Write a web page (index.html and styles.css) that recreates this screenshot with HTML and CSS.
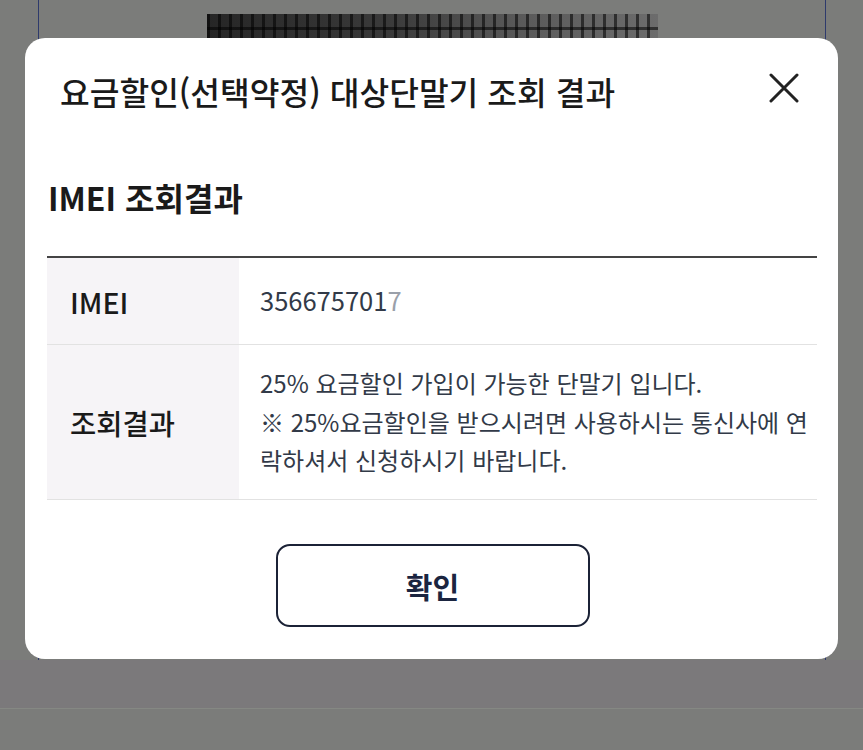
FILE: index.html
```html
<!DOCTYPE html>
<html lang="ko">
<head>
<meta charset="utf-8">
<title>요금할인 대상단말기 조회 결과</title>
<link rel="stylesheet" href="styles.css">
</head>
<body>
<div class="page">
  <div class="page-frame">
    <div class="barcode"></div>
  </div>
  <div class="page-band"></div>
</div>

<div class="overlay">
  <div class="modal" role="dialog" aria-labelledby="modal-title">
    <div class="modal-header">
      <h1 id="modal-title" class="modal-title">요금할인(선택약정) 대상단말기 조회 결과</h1>
      <button class="close-btn" aria-label="닫기">
        <svg width="30" height="30" viewBox="0 0 30 30" aria-hidden="true">
          <path d="M2 2 L28 28 M28 2 L2 28" stroke="#222" stroke-width="3" stroke-linecap="round" fill="none"/>
        </svg>
      </button>
    </div>

    <h2 class="section-title">IMEI 조회결과</h2>

    <table class="result-table">
      <tr class="row-imei">
        <th>IMEI</th>
        <td><span class="imei-num">356675701<span class="fade">7</span></span></td>
      </tr>
      <tr class="row-result">
        <th>조회결과</th>
        <td>
          <span class="line">25% 요금할인 가입이 가능한 단말기 입니다.</span>
          <span class="line">※ 25%요금할인을 받으시려면 사용하시는 통신사에 연</span>
          <span class="line">락하셔서 신청하시기 바랍니다.</span>
        </td>
      </tr>
    </table>

    <div class="modal-footer">
      <button class="confirm-btn">확인</button>
    </div>
  </div>
</div>
</body>
</html>
```

FILE: styles.css
```css
html, body {
  margin: 0;
  padding: 0;
}

body {
  width: 863px;
  height: 750px;
  overflow: hidden;
  background: #7b7c7a;
  font-family: "Noto Sans CJK KR", "Noto Sans", sans-serif;
  position: relative;
}

.page {
  display: flex;
  flex-direction: column;
}

.page-frame {
  height: 660px;
  margin: 0 37px 0 38px;
  border-left: 1px solid #2e3a6c;
  border-right: 1px solid #2e3a6c;
  display: flex;
  justify-content: center;
  padding-top: 14px;
  box-sizing: border-box;
}

.barcode {
  width: 451px;
  height: 60px;
  background:
    repeating-linear-gradient(90deg, rgba(0,0,0,0.55) 0 3px, transparent 3px 11px),
    repeating-linear-gradient(180deg, transparent 0 13px, rgba(0,0,0,0.55) 13px 16px),
    linear-gradient(90deg, #262626 0%, #3a3a3a 40%, #5a5a5a 70%, #6c6c6c 100%);
}

.page-band {
  height: 48px;
  background: #7b797b;
  border-bottom: 1px solid #858883;
}

.overlay {
  position: absolute;
  inset: 0;
}

.modal {
  position: absolute;
  left: 25px;
  top: 38px;
  width: 813px;
  height: 621px;
  box-sizing: border-box;
  background: #fff;
  border-radius: 20px;
  padding: 0 21px 32px 22px;
  display: flex;
  flex-direction: column;
}

.modal-header {
  height: 106px;
  display: flex;
  align-items: center;
  justify-content: space-between;
  padding: 0 18px 0 13px;
}

.modal-title {
  margin: 0;
  font-size: 32.3px;
  font-weight: 500;
  color: #1a1a1a;
}

.close-btn {
  border: 0;
  background: none;
  padding: 0;
  width: 30px;
  height: 30px;
  display: flex;
  margin-bottom: 6px;
}

.section-title {
  margin: 33px 0 0 1px;
  font-size: 32px;
  line-height: 40px;
  font-weight: 700;
  color: #1a1a1a;
}

.result-table {
  margin-top: 39px;
  width: 100%;
  border-collapse: collapse;
  border-top: 2px solid #444;
}

.result-table th,
.result-table td {
  border-bottom: 1px solid #e2e2e2;
  text-align: left;
  vertical-align: middle;
}

.result-table th {
  width: 192px;
  box-sizing: border-box;
  background: #f6f4f7;
  padding: 0 0 0 23px;
  font-size: 28.5px;
  font-weight: 500;
  color: #1a1a1a;
}

.result-table td {
  padding: 0 0 0 21px;
  font-size: 24px;
  color: #323a48;
  line-height: 38.5px;
}

.row-imei th,
.row-imei td {
  height: 86px;
}

.row-result th,
.row-result td {
  height: 154px;
}

.imei-num {
  font-size: 25.5px;
}

.fade {
  color: #9aa0aa;
}

.line {
  display: block;
  white-space: nowrap;
}

.modal-footer {
  margin-top: auto;
  display: flex;
  justify-content: center;
}

.confirm-btn {
  width: 314px;
  height: 83px;
  box-sizing: border-box;
  border: 2px solid #1b2236;
  border-radius: 14px;
  background: #fff;
  font-family: "Noto Sans CJK KR", "Noto Sans", sans-serif;
  font-size: 29px;
  font-weight: 700;
  color: #1b2540;
  margin-left: 1px;
}
```
